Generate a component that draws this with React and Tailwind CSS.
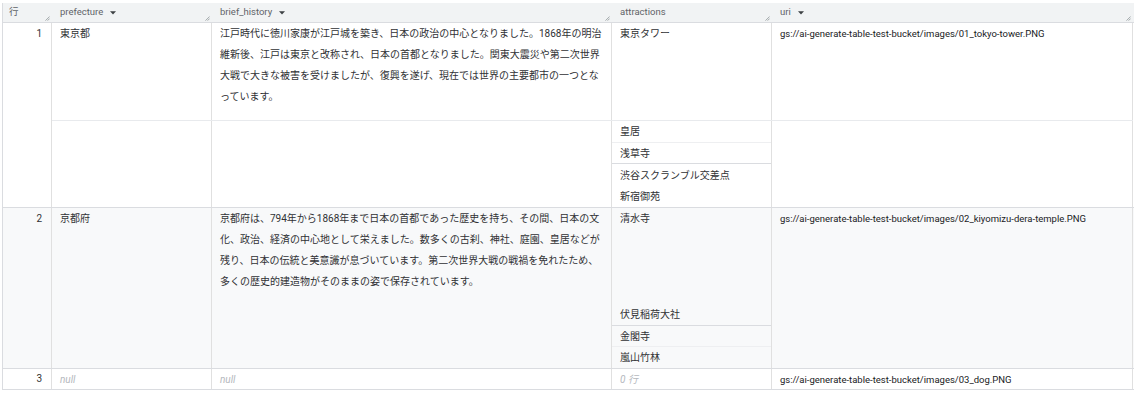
const FONT = "font-['Roboto','Noto_Sans_CJK_JP',sans-serif]";

const TOKYO_HISTORY = [
  "江戸時代に徳川家康が江戸城を築き、日本の政治の中心となりました。1868年の明治",
  "維新後、江戸は東京と改称され、日本の首都となりました。関東大震災や第二次世界",
  "大戦で大きな被害を受けましたが、復興を遂げ、現在では世界の主要都市の一つとな",
  "っています。",
];

const KYOTO_HISTORY = [
  "京都府は、794年から1868年まで日本の首都であった歴史を持ち、その間、日本の文",
  "化、政治、経済の中心地として栄えました。数多くの古刹、神社、庭園、皇居などが",
  "残り、日本の伝統と美意識が息づいています。第二次世界大戦の戦禍を免れたため、",
  "多くの歴史的建造物がそのままの姿で保存されています。",
];

function SortArrow() {
  return (
    <svg width="6" height="4" viewBox="0 0 6 4" className="ml-[7px] shrink-0">
      <path d="M0 0.3h6L3 3.6z" fill="#3c4043" />
    </svg>
  );
}

function ResizeHandle() {
  return (
    <svg
      width="5"
      height="5"
      viewBox="0 0 5 5"
      className="absolute right-[2px] bottom-[1px]"
    >
      <path d="M0.5 4.6L4.6 0.5M2.6 4.6L4.6 2.6" stroke="#80868b" strokeWidth="0.7" />
    </svg>
  );
}

function HeadCell({ width, children, sort, pad = "pl-[8px]" }) {
  return (
    <div className={`relative flex items-center h-full ${width} ${pad} shrink-0`}>
      <span>{children}</span>
      {sort && <SortArrow />}
      <ResizeHandle />
    </div>
  );
}

function Cell({ width, children, className = "" }) {
  return (
    <div
      className={`${width} shrink-0 border-r border-[#e0e0e0] pl-[8px] leading-[21px] ${className}`}
    >
      {children}
    </div>
  );
}

function Lines({ lines }) {
  return lines.map((line, i) => (
    <div key={i} className="whitespace-nowrap">
      {line}
    </div>
  ));
}

function Sub({ h, border, children }) {
  return (
    <div
      className={`${h} flex items-center pl-[8px] ${
        border === "dark"
          ? "border-b border-[#dadce0]"
          : border === "light"
          ? "border-b border-[#eeeff1]"
          : ""
      }`}
    >
      {children}
    </div>
  );
}

export default function App() {
  return (
    <div className={`${FONT} bg-white w-[1134px] h-[393px] pt-[3px] text-[10px] text-[#303134]`}>
      <div className="ml-[2px] w-[1132px] border-l border-[#dadce0]">
        {/* header */}
        <div className="flex h-[20px] bg-[#f1f3f4] border-b border-[#dadce0] text-[9.5px] text-[#5f6368]">
          <HeadCell width="w-[49px]" pad="pl-[6px]">行</HeadCell>
          <HeadCell width="w-[160px]" sort>prefecture</HeadCell>
          <HeadCell width="w-[400px]" sort>brief_history</HeadCell>
          <HeadCell width="w-[160px]">attractions</HeadCell>
          <HeadCell width="w-[361px]" sort>uri</HeadCell>
        </div>

        {/* row 1 */}
        <div className="flex border-b border-[#dadce0] bg-white">
          <div className="w-[49px] shrink-0 border-r border-[#e0e0e0] text-right pr-[9px] leading-[21px]">
            1
          </div>
          <div className="flex flex-col">
            <div className="flex h-[98px] border-b border-[#e8eaed]">
              <Cell width="w-[160px]">東京都</Cell>
              <Cell width="w-[400px]">
                <Lines lines={TOKYO_HISTORY} />
              </Cell>
              <Cell width="w-[160px]">東京タワー</Cell>
              <Cell width="w-[361px]" className="text-[9.5px] text-[#202124]">
                gs://ai-generate-table-test-bucket/images/01_tokyo-tower.PNG
              </Cell>
            </div>
            <div className="flex h-[86px]">
              <Cell width="w-[160px]" />
              <Cell width="w-[400px]" />
              <div className="w-[160px] shrink-0 border-r border-[#e0e0e0] flex flex-col">
                <Sub h="h-[22px]" border="light">皇居</Sub>
                <Sub h="h-[21px]" border="dark">浅草寺</Sub>
                <Sub h="h-[22px]">渋谷スクランブル交差点</Sub>
                <Sub h="h-[21px]">新宿御苑</Sub>
              </div>
              <Cell width="w-[361px]" />
            </div>
          </div>
        </div>

        {/* row 2 */}
        <div className="flex h-[161px] border-b border-[#dadce0] bg-[#f8f9fa]">
          <div className="w-[49px] shrink-0 border-r border-[#e0e0e0] text-right pr-[9px] leading-[21px]">
            2
          </div>
          <Cell width="w-[160px]">京都府</Cell>
          <Cell width="w-[400px]">
            <Lines lines={KYOTO_HISTORY} />
          </Cell>
          <div className="w-[160px] shrink-0 border-r border-[#e0e0e0] flex flex-col">
            <div className="flex-1 pl-[8px] leading-[21px]">清水寺</div>
            <Sub h="h-[22px]" border="dark">伏見稲荷大社</Sub>
            <Sub h="h-[21px]" border="light">金閣寺</Sub>
            <Sub h="h-[21px]">嵐山竹林</Sub>
          </div>
          <Cell width="w-[361px]" className="text-[9.5px] text-[#202124]">
            gs://ai-generate-table-test-bucket/images/02_kiyomizu-dera-temple.PNG
          </Cell>
        </div>

        {/* row 3 */}
        <div className="flex h-[21px] border-b border-[#dadce0] bg-white">
          <div className="w-[49px] shrink-0 border-r border-[#e0e0e0] text-right pr-[9px] leading-[20px]">
            3
          </div>
          <Cell width="w-[160px]" className="italic text-[#b4b8bd] leading-[20px]">null</Cell>
          <Cell width="w-[400px]" className="italic text-[#b4b8bd] leading-[20px]">null</Cell>
          <Cell width="w-[160px]" className="italic text-[#b4b8bd] leading-[20px]">0 行</Cell>
          <Cell width="w-[361px]" className="text-[9.5px] text-[#202124] leading-[20px]">
            gs://ai-generate-table-test-bucket/images/03_dog.PNG
          </Cell>
        </div>
      </div>
    </div>
  );
}
